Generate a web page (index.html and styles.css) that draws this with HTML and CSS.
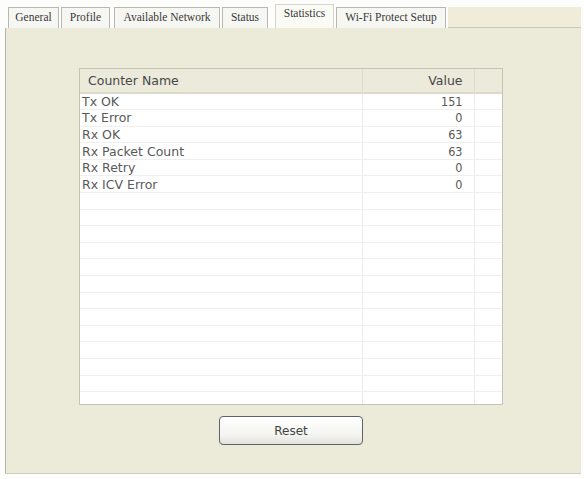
FILE: index.html
```html
<!DOCTYPE html>
<html lang="en">
<head>
    <meta charset="UTF-8">
    <title>Statistics</title>
    <link rel="stylesheet" href="styles.css">
</head>
<body>
    <div class="window">
        <div class="tabs">
            <div class="tab t-general">General</div>
            <div class="tab t-profile">Profile</div>
            <div class="tab t-network">Available Network</div>
            <div class="tab t-status">Status</div>
            <div class="tab active t-stats">Statistics</div>
            <div class="tab t-wps">Wi-Fi Protect Setup</div>
            <div class="tab-rest"></div>
        </div>
        <div class="panel">
            <div class="list">
                <table>
                    <thead>
                        <tr><th class="name">Counter Name</th><th class="value">Value</th><th class="fill"></th></tr>
                    </thead>
                    <tbody>
                        <tr><td>Tx OK</td><td class="value">151</td><td></td></tr>
                        <tr><td>Tx Error</td><td class="value">0</td><td></td></tr>
                        <tr><td>Rx OK</td><td class="value">63</td><td></td></tr>
                        <tr><td>Rx Packet Count</td><td class="value">63</td><td></td></tr>
                        <tr><td>Rx Retry</td><td class="value">0</td><td></td></tr>
                        <tr><td>Rx ICV Error</td><td class="value">0</td><td></td></tr>
                        <tr><td></td><td></td><td></td></tr>
                        <tr><td></td><td></td><td></td></tr>
                        <tr><td></td><td></td><td></td></tr>
                        <tr><td></td><td></td><td></td></tr>
                        <tr><td></td><td></td><td></td></tr>
                        <tr><td></td><td></td><td></td></tr>
                        <tr><td></td><td></td><td></td></tr>
                        <tr><td></td><td></td><td></td></tr>
                        <tr><td></td><td></td><td></td></tr>
                        <tr><td></td><td></td><td></td></tr>
                        <tr><td></td><td></td><td></td></tr>
                        <tr><td></td><td></td><td></td></tr>
                        <tr><td></td><td></td><td></td></tr>
                    </tbody>
                </table>
            </div>
            <button class="reset">Reset</button>
        </div>
    </div>
</body>
</html>
```

FILE: styles.css
```css
*, *:before, *:after {
    margin: 0;
    padding: 0;
    box-sizing: border-box;
}
body {
    background: #fdfdfb;
    font-family: "Liberation Sans", Arial, sans-serif;
}
.window {
    padding: 4px 3px 4px 5px;
}
.tabs {
    display: flex;
    align-items: flex-end;
    height: 24px;
    padding-left: 3px;
}
.tab {
    height: 21px;
    margin-right: 2px;
    padding-top: 3px;
    border: 1px solid #b8b8b0;
    border-bottom: none;
    background: #f6f6f2;
    font-family: "Liberation Serif", "Times New Roman", serif;
    font-size: 11.5px;
    color: #3a3a3a;
    text-align: center;
    white-space: nowrap;
}
.t-general { width: 51px; }
.t-profile { width: 49px; }
.t-network { width: 106px; margin-left: 2px; }
.t-status { width: 46px; }
.t-stats { width: 59px; margin-left: 5px; }
.t-wps { width: 110px; }
.tab.active {
    height: 24px;
    border-color: #d4d4cc;
    background: #fbfbf6;
    padding-top: 2px;
}
.tab-rest {
    flex: 1;
    height: 21px;
    background: #efedd9;
    border-bottom: 1px solid #c9c8bc;
}
.panel {
    height: 446px;
    background: #ecead9;
    border-left: 1px solid #b5b4aa;
    border-bottom: 1px solid #cfcdc0;
    display: flex;
    flex-direction: column;
    align-items: flex-start;
    padding: 40px 0 0 73px;
}
.list {
    width: 424px;
    height: 337px;
    background: #fff;
    border: 1px solid #c6c4b5;
    overflow: hidden;
}
table {
    width: 100%;
    border-collapse: collapse;
    font-family: "DejaVu Sans", Tahoma, sans-serif;
    font-size: 12.5px;
    color: #595959;
    table-layout: fixed;
}
th {
    height: 24px;
    background: #ebeadb;
    font-weight: normal;
    color: #484848;
    border-bottom: 2px solid #dcdacb;
    border-right: 1px solid #dcdbd0;
}
th.name {
    width: 282px;
    text-align: left;
    padding-left: 8px;
}
th.value {
    width: 112px;
    text-align: right;
    padding-right: 11px;
}
th.fill {
    border-right: none;
}
td {
    height: 16.6px;
    padding: 0 0 0 2px;
    border-bottom: 1px solid #efefef;
    border-right: 1px solid #ebebeb;
    line-height: 15px;
    white-space: nowrap;
}
td.value {
    text-align: right;
    padding-right: 11px;
    font-family: "DejaVu Sans Condensed", Tahoma, sans-serif;
}
td:last-child {
    border-right: none;
}
.reset {
    margin: 11px 0 0 140px;
    width: 144px;
    height: 29px;
    border: 1px solid #5d636a;
    border-radius: 4px;
    background: linear-gradient(#ffffff, #f3f3ef 70%, #e2e1da);
    font-family: "DejaVu Sans", Tahoma, sans-serif;
    font-size: 12px;
    color: #444;
}
```
